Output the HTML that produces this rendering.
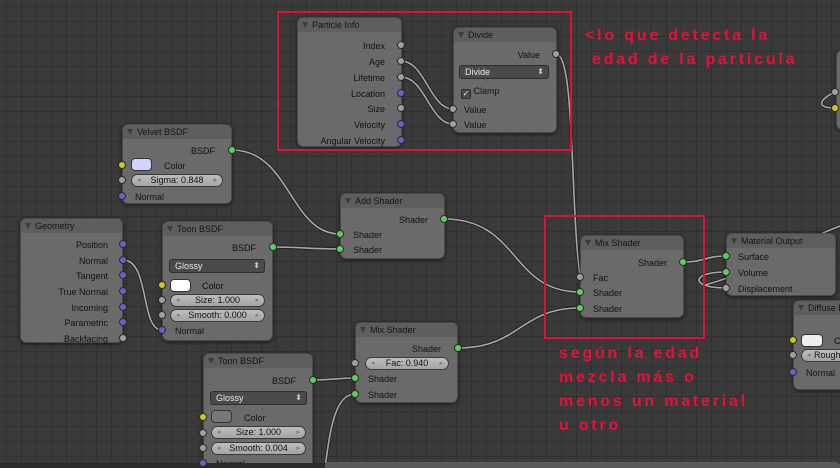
<!DOCTYPE html>
<html style="width:840px;height:468px;overflow:hidden"><head><meta charset="utf-8"><style>
*{margin:0;padding:0;box-sizing:border-box}
body{width:840px;height:468px;overflow:hidden;position:relative;font-family:"Liberation Sans",sans-serif;font-size:9px;color:#111;
background-color:#3a3a3a;
background-image:linear-gradient(#313131 1px,transparent 1px),linear-gradient(90deg,#313131 1px,transparent 1px);
background-size:15px 15px;background-position:6px 6px}
.n{position:absolute;background:#6a6a6a;border-radius:6px;box-shadow:0 1px 4px rgba(0,0,0,.6);border:1px solid #4a4a4a}
.h{height:14px;background:#5e5e5e;border-radius:5px 5px 0 0;padding-left:14px;line-height:14px;color:#151515;position:relative}
.h:before{content:"";position:absolute;left:4px;top:4px;border-left:3px solid transparent;border-right:3px solid transparent;border-top:6px solid #3c3c3c}
.t{position:absolute;line-height:10px;white-space:nowrap}
.r{text-align:right}
.s{position:absolute;width:8px;height:8px;border-radius:50%;border:1px solid #2a2a2a;margin:-4px 0 0 -4px;z-index:5}
.g{background:#a0a0a0}.b{background:#6363cc}.y{background:#c8c820}.gr{background:#5ad05a}
.f{position:absolute;height:13px;border-radius:7px;background:linear-gradient(#bdbdbd,#a5a5a5);border:1px solid #3a3a3a;text-align:center;line-height:11px}
.f:before{content:"◂";position:absolute;left:5px;color:#777;font-size:7px}
.f:after{content:"▸";position:absolute;right:5px;color:#777;font-size:7px}
.d{position:absolute;height:14px;border-radius:3px;background:#4a4a4a;border:1px solid #2e2e2e;color:#e8e8e8;line-height:12px;padding-left:5px}
.d:after{content:"⬍";position:absolute;right:4px;font-size:8px;color:#ccc}
.sw{position:absolute;height:13px;border-radius:4px;border:1px solid #333}
.red{position:absolute;border:2px solid #e0103c}
.txt{position:absolute;color:#e8103a;font-size:16px;font-weight:bold;letter-spacing:2.8px;line-height:24px;white-space:nowrap}
svg{position:absolute;left:0;top:0}
</style></head><body>
<svg width="840" height="468" style="z-index:1">
<g fill="none" stroke-linecap="round">
<g stroke="#222" stroke-width="3.4">
<path d="M401 61 C425 61,430 109,453 109"/>
<path d="M401 77 C425 77,430 124,453 124"/>
<path d="M556 54 C575 54,570 200,580 277"/>
<path d="M232 150 C290 150,290 234,340 234"/>
<path d="M273 247 C300 247,310 249,340 249"/>
<path d="M444 219 C520 219,510 292,580 292"/>
<path d="M458 348 C520 348,520 308,580 308"/>
<path d="M123 260 C150 260,140 330,162 330"/>
<path d="M313 380 C335 380,335 378,355 378"/>
<path d="M325 468 C330 430,335 394,355 394"/>
<path d="M683 262 C705 262,705 256,726 256"/>
<path d="M726 272 C690 272,690 288,726 288"/>
<path d="M705 285 C760 270,790 245,840 226"/>
<path d="M835 108 C810 108,825 95,840 90"/>
</g>
<g stroke="#a8a8a8" stroke-width="1.6">
<path d="M401 61 C425 61,430 109,453 109"/>
<path d="M401 77 C425 77,430 124,453 124"/>
<path d="M556 54 C575 54,570 200,580 277"/>
<path d="M232 150 C290 150,290 234,340 234"/>
<path d="M273 247 C300 247,310 249,340 249"/>
<path d="M444 219 C520 219,510 292,580 292"/>
<path d="M458 348 C520 348,520 308,580 308"/>
<path d="M123 260 C150 260,140 330,162 330"/>
<path d="M313 380 C335 380,335 378,355 378"/>
<path d="M325 468 C330 430,335 394,355 394"/>
<path d="M683 262 C705 262,705 256,726 256"/>
<path d="M726 272 C690 272,690 288,726 288"/>
<path d="M705 285 C760 270,790 245,840 226"/>
<path d="M835 108 C810 108,825 95,840 90"/>
</g></g></svg>

<div class="n" style="left:297px;top:17px;width:105px;height:130px;z-index:2"><div class="h">Particle Info</div>
<div class="t r" style="right:16px;top:23px">Index</div>
<div class="t r" style="right:16px;top:39px">Age</div>
<div class="t r" style="right:16px;top:55px">Lifetime</div>
<div class="t r" style="right:16px;top:71px">Location</div>
<div class="t r" style="right:16px;top:86px">Size</div>
<div class="t r" style="right:16px;top:102px">Velocity</div>
<div class="t r" style="right:16px;top:118px">Angular Velocity</div></div>
<div class="s g" style="left:401px;top:45px"></div><div class="s g" style="left:401px;top:61px"></div><div class="s g" style="left:401px;top:77px"></div><div class="s b" style="left:401px;top:93px"></div><div class="s g" style="left:401px;top:108px"></div><div class="s b" style="left:401px;top:124px"></div><div class="s b" style="left:401px;top:140px"></div>

<div class="n" style="left:453px;top:27px;width:104px;height:106px;z-index:2"><div class="h">Divide</div>
<div class="t r" style="right:16px;top:22px">Value</div>
<div class="d" style="left:5px;top:37px;width:90px">Divide</div>
<div class="t" style="left:7px;top:58px"><span style="display:inline-block;width:10px;height:10px;border-radius:2px;background:#4a4a4a;border:1px solid #2e2e2e;color:#eee;font-size:8px;line-height:8px;text-align:center;vertical-align:-2px">✓</span> Clamp</div>
<div class="t" style="left:10px;top:77px">Value</div>
<div class="t" style="left:10px;top:92px">Value</div></div>
<div class="s g" style="left:556px;top:54px"></div><div class="s g" style="left:453px;top:109px"></div><div class="s g" style="left:453px;top:124px"></div>

<div class="n" style="left:122px;top:124px;width:110px;height:80px;z-index:2"><div class="h">Velvet BSDF</div>
<div class="t r" style="right:16px;top:21px">BSDF</div>
<div class="sw" style="left:8px;top:33px;width:21px;background:#d0d4ff"></div>
<div class="t" style="left:41px;top:36px">Color</div>
<div class="f" style="left:8px;top:49px;width:92px">Sigma: 0.848</div>
<div class="t" style="left:12px;top:67px">Normal</div></div>
<div class="s gr" style="left:232px;top:150px"></div><div class="s y" style="left:122px;top:165px"></div><div class="s g" style="left:122px;top:180px"></div><div class="s b" style="left:122px;top:196px"></div>

<div class="n" style="left:20px;top:218px;width:103px;height:125px;z-index:2"><div class="h">Geometry</div>
<div class="t r" style="right:14px;top:21px">Position</div>
<div class="t r" style="right:14px;top:37px">Normal</div>
<div class="t r" style="right:14px;top:52px">Tangent</div>
<div class="t r" style="right:14px;top:68px">True Normal</div>
<div class="t r" style="right:14px;top:84px">Incoming</div>
<div class="t r" style="right:14px;top:99px">Parametric</div>
<div class="t r" style="right:14px;top:115px">Backfacing</div></div>
<div class="s b" style="left:123px;top:244px"></div><div class="s b" style="left:123px;top:260px"></div><div class="s b" style="left:123px;top:275px"></div><div class="s b" style="left:123px;top:291px"></div><div class="s b" style="left:123px;top:307px"></div><div class="s b" style="left:123px;top:322px"></div><div class="s g" style="left:123px;top:338px"></div>

<div class="n" style="left:162px;top:221px;width:111px;height:120px;z-index:2"><div class="h">Toon BSDF</div>
<div class="t r" style="right:16px;top:21px">BSDF</div>
<div class="d" style="left:6px;top:37px;width:96px">Glossy</div>
<div class="sw" style="left:7px;top:57px;width:21px;background:#fff"></div>
<div class="t" style="left:39px;top:59px">Color</div>
<div class="f" style="left:7px;top:72px;width:95px">Size: 1.000</div>
<div class="f" style="left:7px;top:87px;width:95px">Smooth: 0.000</div>
<div class="t" style="left:12px;top:104px">Normal</div></div>
<div class="s gr" style="left:273px;top:247px"></div><div class="s y" style="left:162px;top:285px"></div><div class="s g" style="left:162px;top:300px"></div><div class="s g" style="left:162px;top:315px"></div><div class="s b" style="left:162px;top:330px"></div>

<div class="n" style="left:340px;top:193px;width:105px;height:66px;z-index:2"><div class="h">Add Shader</div>
<div class="t r" style="right:16px;top:21px">Shader</div>
<div class="t" style="left:12px;top:36px">Shader</div>
<div class="t" style="left:12px;top:51px">Shader</div></div>
<div class="s gr" style="left:444px;top:219px"></div><div class="s gr" style="left:340px;top:234px"></div><div class="s gr" style="left:340px;top:249px"></div>

<div class="n" style="left:580px;top:235px;width:104px;height:83px;z-index:2"><div class="h">Mix Shader</div>
<div class="t r" style="right:16px;top:22px">Shader</div>
<div class="t" style="left:12px;top:37px">Fac</div>
<div class="t" style="left:12px;top:52px">Shader</div>
<div class="t" style="left:12px;top:68px">Shader</div></div>
<div class="s gr" style="left:683px;top:262px"></div><div class="s g" style="left:580px;top:277px"></div><div class="s gr" style="left:580px;top:292px"></div><div class="s gr" style="left:580px;top:308px"></div>

<div class="n" style="left:726px;top:233px;width:110px;height:63px;z-index:2"><div class="h">Material Output</div>
<div class="t" style="left:11px;top:18px">Surface</div>
<div class="t" style="left:11px;top:34px">Volume</div>
<div class="t" style="left:11px;top:50px">Displacement</div></div>
<div class="s gr" style="left:726px;top:256px"></div><div class="s gr" style="left:726px;top:272px"></div><div class="s g" style="left:726px;top:288px"></div>

<div class="n" style="left:793px;top:300px;width:60px;height:90px;z-index:2"><div class="h">Diffuse B</div>
<div class="sw" style="left:7px;top:33px;width:22px;background:#eee"></div>
<div class="t" style="left:40px;top:35px">Co</div>
<div class="f" style="left:7px;top:48px;width:60px;text-align:left;padding-left:12px">Roughn</div>
<div class="t" style="left:12px;top:67px">Normal</div></div>
<div class="s y" style="left:793px;top:340px"></div><div class="s g" style="left:793px;top:355px"></div><div class="s b" style="left:793px;top:372px"></div>

<div class="n" style="left:836px;top:50px;width:20px;height:80px;z-index:2"></div>
<div class="s g" style="left:835px;top:92px"></div><div class="s y" style="left:835px;top:108px"></div>

<div class="n" style="left:355px;top:322px;width:103px;height:81px;z-index:2"><div class="h">Mix Shader</div>
<div class="t r" style="right:16px;top:21px">Shader</div>
<div class="f" style="left:9px;top:34px;width:84px">Fac: 0.940</div>
<div class="t" style="left:12px;top:51px">Shader</div>
<div class="t" style="left:12px;top:67px">Shader</div></div>
<div class="s gr" style="left:458px;top:348px"></div><div class="s g" style="left:355px;top:363px"></div><div class="s gr" style="left:355px;top:378px"></div><div class="s gr" style="left:355px;top:394px"></div>

<div class="n" style="left:203px;top:353px;width:110px;height:115px;z-index:2;border-bottom-left-radius:0;border-bottom-right-radius:0"><div class="h">Toon BSDF</div>
<div class="t r" style="right:16px;top:22px">BSDF</div>
<div class="d" style="left:6px;top:37px;width:97px">Glossy</div>
<div class="sw" style="left:7px;top:56px;width:21px;background:#777"></div>
<div class="t" style="left:40px;top:59px">Color</div>
<div class="f" style="left:7px;top:72px;width:95px">Size: 1.000</div>
<div class="f" style="left:7px;top:88px;width:95px">Smooth: 0.004</div>
<div class="t" style="left:12px;top:105px">Normal</div></div>
<div class="s y" style="left:203px;top:417px"></div><div class="s g" style="left:203px;top:433px"></div><div class="s g" style="left:203px;top:448px"></div><div class="s b" style="left:203px;top:463px"></div>
<div class="s gr" style="left:313px;top:380px"></div>
<div style="position:absolute;left:0;top:463px;width:840px;height:5px;background:#2a2a2a;z-index:3"></div>
<div style="position:absolute;left:325px;top:462px;width:515px;height:6px;background:#5a5a5a;border-radius:4px 4px 0 0;z-index:4"></div>

<div class="red" style="left:277px;top:11px;width:295px;height:140px;z-index:6"></div>
<div class="red" style="left:544px;top:215px;width:161px;height:124px;z-index:6"></div>
<div class="txt" style="left:585px;top:24px">&lt;lo que detecta la</div>
<div class="txt" style="left:592px;top:48px">edad de la partícula</div>
<div class="txt" style="left:559px;top:342px">según la edad<br>mezcla más o<br>menos un material<br>u otro</div>
</body></html>
